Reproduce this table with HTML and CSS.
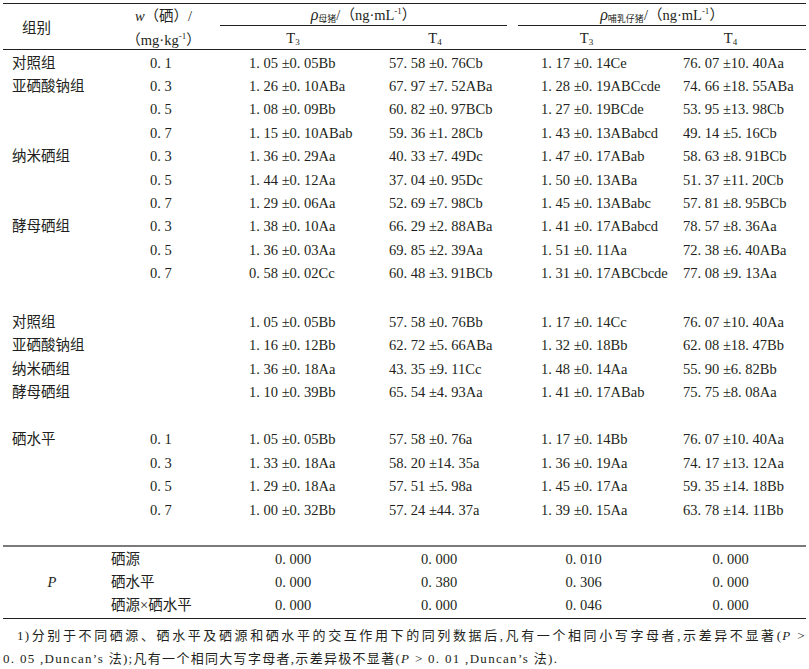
FILE: index.html
```html
<!DOCTYPE html>
<html lang="zh">
<head>
<meta charset="utf-8">
<link rel="stylesheet" href="styles.css">
</head>
<body>
<table class="tbl">
<colgroup><col class="c1"><col class="c2"><col class="c3"><col class="c4"><col class="c5"><col class="c6"></colgroup>
<thead>
<tr class="h1">
<th rowspan="2" class="grp">组别</th>
<th class="wh"><i>w</i>（硒）/</th>
<th colspan="2" class="rho"><div class="subline sl-l"><i class="rh">ρ</i><span class="sb">母猪</span>/（ng·mL<span class="sp">-1</span>）</div></th>
<th colspan="2" class="rho"><div class="subline sl-r"><i class="rh">ρ</i><span class="sb">哺乳仔猪</span>/（ng·mL<span class="sp">-1</span>）</div></th>
</tr>
<tr class="h2">
<th>（mg·kg<span class="sp">-1</span>）</th>
<th>T<span class="sb">3</span></th>
<th class="t4">T<span class="sb">4</span></th>
<th class="t3b">T<span class="sb">3</span></th>
<th>T<span class="sb">4</span></th>
</tr>
</thead>
<tbody class="data">
<tr class="first"><td>对照组</td><td>0. 1</td><td>1. 05 ±0. 05Bb</td><td>57. 58 ±0. 76Cb</td><td>1. 17 ±0. 14Ce</td><td>76. 07 ±10. 40Aa</td></tr>
<tr><td>亚硒酸钠组</td><td>0. 3</td><td>1. 26 ±0. 10ABa</td><td>67. 97 ±7. 52ABa</td><td>1. 28 ±0. 19ABCcde</td><td>74. 66 ±18. 55ABa</td></tr>
<tr><td></td><td>0. 5</td><td>1. 08 ±0. 09Bb</td><td>60. 82 ±0. 97BCb</td><td>1. 27 ±0. 19BCde</td><td>53. 95 ±13. 98Cb</td></tr>
<tr><td></td><td>0. 7</td><td>1. 15 ±0. 10ABab</td><td>59. 36 ±1. 28Cb</td><td>1. 43 ±0. 13ABabcd</td><td>49. 14 ±5. 16Cb</td></tr>
<tr><td>纳米硒组</td><td>0. 3</td><td>1. 36 ±0. 29Aa</td><td>40. 33 ±7. 49Dc</td><td>1. 47 ±0. 17ABab</td><td>58. 63 ±8. 91BCb</td></tr>
<tr><td></td><td>0. 5</td><td>1. 44 ±0. 12Aa</td><td>37. 04 ±0. 95Dc</td><td>1. 50 ±0. 13ABa</td><td>51. 37 ±11. 20Cb</td></tr>
<tr><td></td><td>0. 7</td><td>1. 29 ±0. 06Aa</td><td>52. 69 ±7. 98Cb</td><td>1. 45 ±0. 13ABabc</td><td>57. 81 ±8. 95BCb</td></tr>
<tr><td>酵母硒组</td><td>0. 3</td><td>1. 38 ±0. 10Aa</td><td>66. 29 ±2. 88ABa</td><td>1. 41 ±0. 17ABabcd</td><td>78. 57 ±8. 36Aa</td></tr>
<tr><td></td><td>0. 5</td><td>1. 36 ±0. 03Aa</td><td>69. 85 ±2. 39Aa</td><td>1. 51 ±0. 11Aa</td><td>72. 38 ±6. 40ABa</td></tr>
<tr><td></td><td>0. 7</td><td>0. 58 ±0. 02Cc</td><td>60. 48 ±3. 91BCb</td><td>1. 31 ±0. 17ABCbcde</td><td>77. 08 ±9. 13Aa</td></tr>
<tr class="gap1"><td colspan="6"></td></tr>
<tr><td>对照组</td><td></td><td>1. 05 ±0. 05Bb</td><td>57. 58 ±0. 76Bb</td><td>1. 17 ±0. 14Cc</td><td>76. 07 ±10. 40Aa</td></tr>
<tr><td>亚硒酸钠组</td><td></td><td>1. 16 ±0. 12Bb</td><td>62. 72 ±5. 66ABa</td><td>1. 32 ±0. 18Bb</td><td>62. 08 ±18. 47Bb</td></tr>
<tr><td>纳米硒组</td><td></td><td>1. 36 ±0. 18Aa</td><td>43. 35 ±9. 11Cc</td><td>1. 48 ±0. 14Aa</td><td>55. 90 ±6. 82Bb</td></tr>
<tr><td>酵母硒组</td><td></td><td>1. 10 ±0. 39Bb</td><td>65. 54 ±4. 93Aa</td><td>1. 41 ±0. 17ABab</td><td>75. 75 ±8. 08Aa</td></tr>
<tr class="gap2"><td colspan="6"></td></tr>
<tr><td>硒水平</td><td>0. 1</td><td>1. 05 ±0. 05Bb</td><td>57. 58 ±0. 76a</td><td>1. 17 ±0. 14Bb</td><td>76. 07 ±10. 40Aa</td></tr>
<tr><td></td><td>0. 3</td><td>1. 33 ±0. 18Aa</td><td>58. 20 ±14. 35a</td><td>1. 36 ±0. 19Aa</td><td>74. 17 ±13. 12Aa</td></tr>
<tr><td></td><td>0. 5</td><td>1. 29 ±0. 18Aa</td><td>57. 51 ±5. 98a</td><td>1. 45 ±0. 17Aa</td><td>59. 35 ±14. 18Bb</td></tr>
<tr><td></td><td>0. 7</td><td>1. 00 ±0. 32Bb</td><td>57. 24 ±44. 37a</td><td>1. 39 ±0. 15Aa</td><td>63. 78 ±14. 11Bb</td></tr>
<tr class="gap3"><td colspan="6"></td></tr>
</tbody>
<tbody class="pvals">
<tr class="pfirst"><td rowspan="3" class="plabel"><i>P</i></td><td>硒源</td><td>0. 000</td><td>0. 000</td><td>0. 010</td><td>0. 000</td></tr>
<tr><td>硒水平</td><td>0. 000</td><td>0. 380</td><td>0. 306</td><td>0. 000</td></tr>
<tr class="plast"><td>硒源×硒水平</td><td>0. 000</td><td>0. 000</td><td>0. 046</td><td>0. 000</td></tr>
</tbody>
</table>
<p class="note">1)分别于不同硒源、硒水平及硒源和硒水平的交互作用下的同列数据后,凡有一个相同小写字母者,示差异不显著(<i>P</i>&nbsp;&gt; 0.&nbsp;05&nbsp;,Duncan’s 法);凡有一个相同大写字母者,示差异极不显著(<i>P</i>&nbsp;&gt;&nbsp;0.&nbsp;01&nbsp;,Duncan’s 法).</p>
</body>
</html>
```
FILE: styles.css
```css
* { box-sizing: border-box; }
html, body { margin: 0; background: #fff; }
body {
  padding: 2.5px 3px 0;
  width: 809px;
  font-family: "Liberation Serif", "Noto Sans CJK SC", serif;
  font-size: 14.5px;
  color: #231f20;
}
.tbl {
  width: 803px;
  table-layout: fixed;
  border-collapse: separate;
  border-spacing: 0;
}
.c1 { width: 104px; }
.c2 { width: 113px; }
.c3 { width: 146px; }
.c4 { width: 146px; }
.c5 { width: 143px; }
.c6 { width: 151px; }
.tbl th, .tbl td {
  padding: 0;
  font-weight: normal;
  white-space: nowrap;
  vertical-align: middle;
}
.tbl i { font-style: italic; font-family: "Liberation Serif", serif; }
.tbl .rh { font-size: 16px; }
.sb { font-size: 9px; line-height: 0; vertical-align: -2px; }
.sp { font-size: 9px; line-height: 0; vertical-align: 6px; }

/* header */
.h1 th { border-top: 1.5px solid #231f20; height: 23.5px; }
.h1 .grp { text-align: left; padding-left: 19px; border-bottom: 1px solid #231f20; }
.h1 .wh { text-align: center; vertical-align: middle; }
.h1 .rho { vertical-align: bottom; }
.subline {
  text-align: center;
  height: 22px;
  line-height: 22px;
  border-bottom: 1px solid #231f20;
}
.sl-l { margin-right: 5px; }
.sl-r { margin-left: 6px; }
.h2 th {
  text-align: center;
  height: 23.5px;
  padding-top: 2px;
  border-bottom: 1px solid #231f20;
}
.h2 .t4 { padding-right: 8px; }
.h2 .t3b { padding-left: 6px; }

/* data */
.data td { height: 23.4px; line-height: 23.4px; }
.data .first td { padding-top: 1.5px; height: 24.9px; }
.data td:nth-child(1) { padding-left: 9px; }
.data td:nth-child(2) { padding-left: 43px; }
.data td:nth-child(3) { padding-left: 29px; }
.data td:nth-child(4) { padding-left: 23px; }
.data td:nth-child(5) { padding-left: 29px; }
.data td:nth-child(6) { padding-left: 28px; }
.data .gap1 td { height: 25.5px; padding: 0; }
.data .gap2 td { height: 23.7px; padding: 0; }
.data .gap3 td { height: 22.8px; padding: 0; }

/* P values */
.pvals td { height: 23.3px; line-height: 23.3px; text-align: center; }
.pvals .pfirst td { border-top: 2px solid #7a7a7a; padding-top: 1px; height: 24.3px; }
.pvals .plast td, .pvals .plabel { border-bottom: 1.5px solid #231f20; }
.pvals .plabel { padding-right: 6px; }
.pvals tr td:nth-last-child(5) { text-align: left; padding-left: 4px; }

.note {
  margin: 5px 0 0;
  font-size: 13px;
  line-height: 23px;
  letter-spacing: 1.3px;
  text-indent: 14px;
  text-align: justify;
}
.note i { font-family: "Liberation Serif", serif; }
```
